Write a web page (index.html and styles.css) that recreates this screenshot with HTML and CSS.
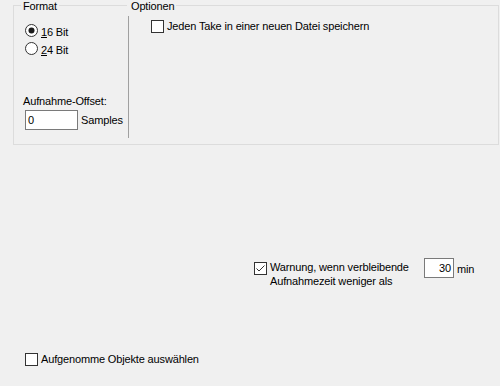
FILE: index.html
```html
<!DOCTYPE html>
<html lang="de">
<head>
    <meta charset="UTF-8">
    <title>Aufnahme</title>
    <link rel="stylesheet" href="styles.css">
</head>
<body>
    <div class="group">
        <div class="col-format">
            <span class="legend legend-format">Format</span>
            <label class="radio-row first">
                <svg class="radio" width="13" height="13" viewBox="0 0 13 13"><circle cx="6.5" cy="6.5" r="6" fill="#fff" stroke="#333"/><circle cx="6.5" cy="6.5" r="3" fill="#1a1a1a"/></svg>
                <span class="text"><u>1</u>6 Bit</span>
            </label>
            <label class="radio-row">
                <svg class="radio" width="13" height="13" viewBox="0 0 13 13"><circle cx="6.5" cy="6.5" r="6" fill="#fff" stroke="#333"/></svg>
                <span class="text"><u>2</u>4 Bit</span>
            </label>
            <div class="offset-label">Aufnahme-Offset:</div>
            <div class="offset-row">
                <div class="field field-offset">0</div>
                <span class="text">Samples</span>
            </div>
        </div>
        <div class="separator"></div>
        <div class="col-options">
            <span class="legend legend-options">Optionen</span>
            <label class="check-row take">
                <span class="check"></span>
                <span class="text">Jeden Take in einer neuen Datei speichern</span>
            </label>
        </div>
    </div>

    <div class="warn">
        <span class="check checked">
            <svg width="11" height="11" viewBox="0 0 11 11"><polyline points="1.5,5.5 4,8 9.5,2.5" fill="none" stroke="#333" stroke-width="1"/></svg>
        </span>
        <span class="warn-text">Warnung, wenn verbleibende<br>Aufnahmezeit weniger als</span>
        <div class="field field-minutes">30</div>
        <span class="text min">min</span>
    </div>

    <label class="check-row select-items">
        <span class="check"></span>
        <span class="text">Aufgenomme Objekte auswählen</span>
    </label>
</body>
</html>
```

FILE: styles.css
```css
body {
    margin: 0;
    width: 500px;
    height: 386px;
    background: #f0f0f0;
    font-family: "Liberation Sans", Arial, sans-serif;
    font-size: 11px;
    letter-spacing: -0.15px;
    color: #000;
    overflow: hidden;
}
.text {
    line-height: 13px;
    white-space: nowrap;
}
.group {
    display: flex;
    box-sizing: border-box;
    width: 486px;
    height: 140px;
    margin: 5px 0 0 13px;
    border: 1px solid #dcdcdc;
}
.col-format {
    width: 114px;
    display: flex;
    flex-direction: column;
    align-items: flex-start;
}
.separator {
    width: 1px;
    background: #a0a0a0;
    margin: 10px 0 6px 0;
}
.col-options {
    flex: 1;
    display: flex;
    flex-direction: column;
    align-items: flex-start;
}
.legend {
    display: inline-block;
    background: #f0f0f0;
    line-height: 13px;
    height: 13px;
    margin-top: -6px;
}
.legend-format {
    margin-left: 7px;
    padding: 0 2px;
}
.legend-options {
    margin-left: -2px;
    padding: 0 2px 0 4px;
}
.radio-row {
    display: flex;
    align-items: flex-start;
    margin: 5px 0 0 11px;
}
.radio-row.first {
    margin-top: 13px;
}
.radio {
    display: block;
    margin: -2px 3px 0 0;
}
.offset-label {
    line-height: 13px;
    margin: 38px 0 0 9px;
}
.offset-row {
    display: flex;
    align-items: center;
    margin: 2px 0 0 11px;
}
.field {
    box-sizing: border-box;
    height: 20px;
    background: #fff;
    border: 1px solid #7a7a7a;
    line-height: 18px;
    padding: 0 2px;
}
.field-offset {
    width: 53px;
    margin-right: 3px;
}
.check-row {
    display: flex;
    align-items: center;
}
.check {
    box-sizing: border-box;
    width: 13px;
    height: 13px;
    background: #fff;
    border: 1px solid #333;
    flex: none;
    margin-right: 3px;
}
.check svg {
    display: block;
}
.take {
    margin: 7px 0 0 22px;
}
.warn {
    display: flex;
    align-items: flex-start;
    margin: 115px 0 0 254px;
}
.warn .check {
    margin-top: 2px;
}
.warn-text {
    width: 154px;
    line-height: 14px;
}
.field-minutes {
    width: 30px;
    margin-top: -2px;
    text-align: right;
}
.min {
    margin: 3px 0 0 3px;
}
.select-items {
    margin: 65px 0 0 25px;
}
```
